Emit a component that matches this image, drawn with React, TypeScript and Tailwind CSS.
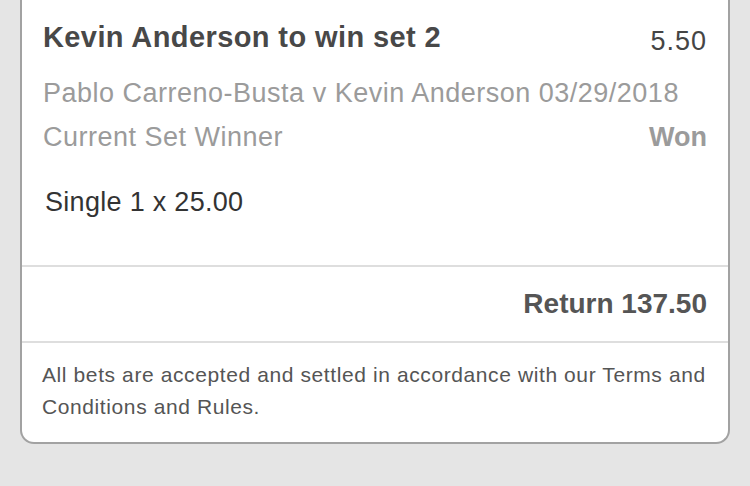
export default function App() {
  return (
    <div
      className="w-[750px] h-[486px] bg-[#e5e5e5] overflow-hidden"
      style={{ fontFamily: '"Liberation Sans", Arial, Helvetica, sans-serif' }}
    >
      <div className="mx-[20px] bg-white border-x-2 border-b-2 border-[#a2a2a2] rounded-b-[14px]">
        {/* Selection details */}
        <div className="px-[21px] pt-[21px] pb-[47px]">
          <div className="flex items-start justify-between">
            <div className="text-[29px] leading-[32px] font-bold text-[#484848] tracking-[0.4px]">
              Kevin Anderson to win set 2
            </div>
            <div className="mt-1 text-[27px] leading-[32px] text-[#454545] tracking-[1px]">5.50</div>
          </div>
          <div className="mt-[14px] text-[27px] leading-[44px] text-[#9b9b9b] tracking-[0.5px]">
            <div>Pablo Carreno-Busta v Kevin Anderson 03/29/2018</div>
            <div className="flex justify-between">
              <span>Current Set Winner</span>
              <span className="font-bold tracking-normal">Won</span>
            </div>
          </div>
          <div className="mt-[27px] pl-[2px] text-[27px] leading-[32px] text-[#333333] tracking-[0.3px]">
            Single 1 x 25.00
          </div>
        </div>

        <div className="h-[2px] bg-[#dedede]" />

        {/* Total return */}
        <div className="px-[21px] py-[21px] flex justify-end">
          <div className="text-[28px] leading-[32px] font-bold text-[#555555]">Return 137.50</div>
        </div>

        <div className="h-[2px] bg-[#dedede]" />

        {/* Terms note */}
        <div className="pl-[20px] pr-[12px] pt-[16px] pb-[19px] text-[21px] leading-[32px] text-[#555555] tracking-[0.6px]">
          All bets are accepted and settled in accordance with our Terms and Conditions and Rules.
        </div>
      </div>
    </div>
  );
}
